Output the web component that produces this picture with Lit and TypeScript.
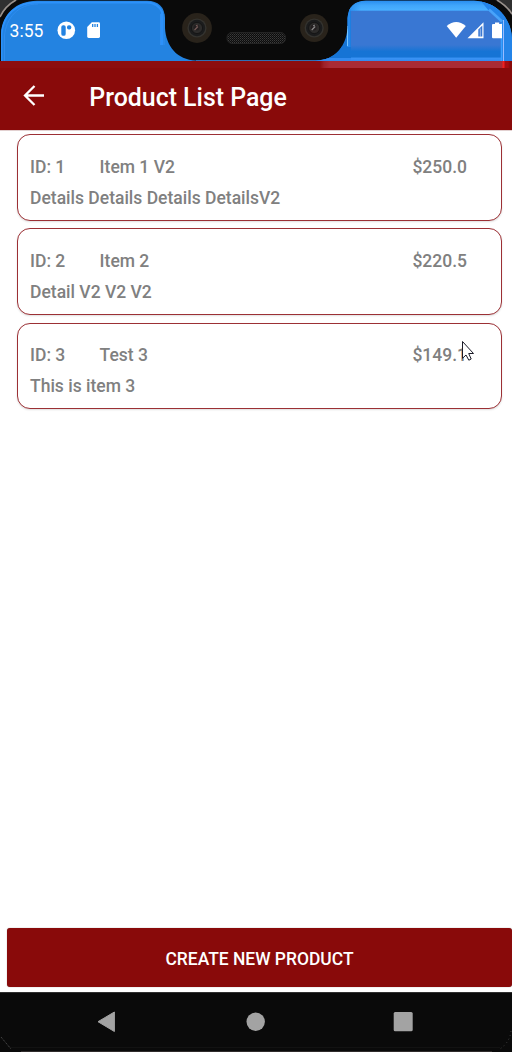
import { LitElement, html, css, svg } from "lit";
import { customElement, property } from "lit/decorators.js";

interface Product {
  id: number;
  name: string;
  price: string;
  details: string;
}

const PRODUCTS: Product[] = [
  { id: 1, name: "Item 1 V2", price: "$250.0", details: "Details Details Details DetailsV2" },
  { id: 2, name: "Item 2", price: "$220.5", details: "Detail V2 V2 V2" },
  { id: 3, name: "Test 3", price: "$149.1", details: "This is item 3" },
];

@customElement("status-bar")
class StatusBar extends LitElement {
  static styles = css`
    :host { display: block; height: 61px; position: relative; background: #0a0a0a; }
    .shell { position: absolute; inset: 0; display: block; }
    .row { position: relative; display: flex; align-items: center; height: 61px; padding-left: 9.600px; box-sizing: border-box; color: #fff; }
    .time { font-size: 17.5px; line-height: 20px; width: 47.400px; }
    .left, .right { display: block; }
    .right { margin-left: auto; }
  `;

  private camera(x: number, y: number, r: number, glint: string) {
    return svg`
      <circle cx=${x} cy=${y} r=${r} fill="#29231b"/>
      <circle cx=${x} cy=${y} r="9.6" fill="#34332f"/>
      <circle cx=${x} cy=${y} r="8.2" fill="#1b1c1d"/>
      <circle cx=${x} cy=${y} r="5.6" fill="#2d2c2b" stroke="#151515" stroke-width="1"/>
      <circle cx=${x - 0.5} cy=${y - 0.5} r="3" fill="#231f20"/>
      <path d="M${x - 2.5} ${y + 2}l3.500-3.500M${x - 1} ${y - 2}l1.500-1" stroke=${glint} stroke-width="1.200" opacity=".8"/>`;
  }

  render() {
    return html`
      <svg class="shell" width="512" height="61" viewBox="0 0 512 61">
        <defs>
          <clipPath id="l"><path d="M1 61V34C2 14 16 1 37 .8H147Q164 1 165 18V28C166 46 177 60 196 60.5V61Z"/></clipPath>
          <clipPath id="r"><path d="M316 61V60.5C335 60 346 47 347.500 28V18Q349 1 366 .8H474C497 2 511 18 512 38V61Z"/></clipPath>
          <linearGradient id="low" x1="0" y1="0" x2="0" y2="1"><stop offset="0" stop-color="#3977d3"/><stop offset=".4" stop-color="#1674d5"/><stop offset=".75" stop-color="#1674d5"/><stop offset=".82" stop-color="#3a93f5"/><stop offset="1" stop-color="#338bee"/></linearGradient>
          <linearGradient id="top" x1="0" y1="0" x2="0" y2="1"><stop offset="0" stop-color="#268aed"/><stop offset=".5" stop-color="#40a6fb"/><stop offset=".9" stop-color="#4ab0ff"/><stop offset="1" stop-color="#3a8fea"/></linearGradient>
          <linearGradient id="fade" x1="0" y1="0" x2="1" y2="0"><stop offset="0" stop-color="#2488ec"/><stop offset="1" stop-color="#2488ec" stop-opacity="0"/></linearGradient>
          <pattern id="mesh" width="2" height="2" patternUnits="userSpaceOnUse"><rect width="2" height="2" fill="#0c0c0c"/><rect width="1" height="1" fill="#3c3c3c"/><rect x="1" y="1" width="1" height="1" fill="#282828"/></pattern>
        </defs>
        <path d="M0 18C5 9 9 4 18 0H0Z" fill="#303030"/>
        <path d="M0 17Q5 6 16 0" fill="none" stroke="#99918c" stroke-width="1.600"/>
        <path d="M495 0Q507 5 512 16V0Z" fill="#303030"/>
        <path d="M497 0Q507 6 512 14" fill="none" stroke="#99918c" stroke-width="1.600"/>
        <g clip-path="url(#l)">
          <rect width="200" height="61" fill="#2383e1"/>
          <path d="M1.500 61V34C3 15 16 2.500 37 2.500H147Q158 3 162 12V45" fill="none" stroke="#2c91fa" stroke-width="2"/>
          <path d="M4.500 61V36C6 18 18 4 38 4" fill="none" stroke="#2e8cee" stroke-width="1"/>
          <path d="M160.500 14V45M164 14V45" stroke="#318ff2" stroke-width="1"/>
        </g>
        <g clip-path="url(#r)">
          <rect x="312" width="200" height="61" fill="#1674d5"/>
          <rect x="351" y="11" width="151" height="36" fill="#3977d3"/>
          <rect x="312" y="46" width="200" height="15" fill="#1674d5"/>
          <rect x="351" y="45" width="151" height="16" fill="url(#low)"/>
          <rect x="312" y="58" width="39" height="3" fill="#338bee"/>
          <rect x="347" y="0" width="165" height="11" fill="url(#top)"/>
          <rect x="347" y="0" width="14" height="11" fill="url(#fade)"/>
          <rect x="347" y="9" width="3.500" height="38" fill="#2488ec"/>
          <path d="M347.500 26V46" stroke="#77c5ff" stroke-width="1"/>
          <path d="M489 11L502 23V61H512V20L495 0H480Z" fill="#2484e8"/>
          <path d="M489 9.500L502 21.500" stroke="#48a3fa" stroke-width="2.500"/>
          <path d="M503.500 20V61" stroke="#99bcff" stroke-width="1"/>
          <path d="M501.500 23V61" stroke="#3aa0ff" stroke-width="1.500"/>
        </g>
        ${this.camera(197, 28, 14.9, "#8a6b66")}
        ${this.camera(314.2, 28, 14.1, "#a5a5a5")}
        <rect x="227" y="32.500" width="58.500" height="11" rx="5" fill="url(#mesh)" stroke="#242424"/>
        <path d="M196 60.500H316" stroke="#2f6fb5" stroke-width="1"/>
      </svg>
      <div class="row">
        <span class="time">3:55</span>
        <svg class="left" width="50" height="22" viewBox="57 20 50 22">
          <circle cx="66.300" cy="30.300" r="8.800" fill="#fff"/>
          <rect x="61.300" y="25.200" width="4.400" height="10.600" rx="1.900" fill="#2383e1"/>
          <rect x="67" y="25.200" width="4.300" height="4.300" rx="1.900" fill="#2383e1"/>
          <path d="M91.800 22.300H98.600Q100 22.300 100 23.700V36.600Q100 38 98.600 38H88.600Q87.200 38 87.200 36.600V27Z" fill="#fff"/>
          <path d="M92.700 24V27M95 24V27M97.400 24V27" stroke="#2383e1" stroke-width="1.300"/>
        </svg>
        <svg class="right" width="68" height="22" viewBox="444 20 68 22">
          <path d="M446.700 26Q456.200 18 465.800 26L456.200 37.700Z" fill="#fff"/>
          <path d="M483.500 22.300V38.200H467.500Z" fill="#fff"/>
          <path d="M478.300 29.500L482.300 25.500V36.600H478.300Z" fill="#3977d3"/>
          <path d="M480.300 28.500V36.600" stroke="#fff" stroke-width="1" opacity=".5"/>
          <path d="M495 22.500H499.200V24H502V38.200H493Q492 38.200 492 37V25Q492 24 493 24H495Z" fill="#fff"/>
        </svg>
      </div>`;
  }
}

@customElement("product-card")
class ProductCard extends LitElement {
  @property({ attribute: false }) product!: Product;

  static styles = css`
    :host { display: block; box-sizing: border-box; height: 86.700px; border: 1px solid #9c3035; border-radius: 13px; background: #fff; box-shadow: 0 1px 2px rgba(0, 0, 0, .13); padding: 20.700px 34px 0 12px; color: #808080; font-size: 17.5px; font-weight: 500; line-height: 23px; white-space: nowrap; }
    .head { display: grid; grid-template-columns: 69.600px 1fr auto; margin-bottom: 8px; }
  `;

  render() {
    const p = this.product;
    return html`
      <div class="head"><span>ID: ${p.id}</span><span>${p.name}</span><span>${p.price}</span></div>
      <div>${p.details}</div>`;
  }
}

@customElement("app-root")
class AppRoot extends LitElement {
  static styles = css`
    :host { display: flex; flex-direction: column; position: relative; width: 512px; height: 1052px; overflow: hidden; background: #fff; font-family: Roboto, "Liberation Sans", sans-serif; }
    status-bar { flex: none; }
    .appbar { flex: none; box-sizing: border-box; height: 69px; padding-left: 22px; display: flex; align-items: center; color: #fff; background: linear-gradient(90deg, #8c0d0f 0 320px, #9e2128 324px, #aa2b34 330px 502px, #f02020 503px 504px, #a80c10 505px 508px, #890a0a 510px) 0 0 / 100% 7px no-repeat #890a0a; }
    .appbar h1 { margin: 4px 0 0 43.300px; font-size: 24.900px; line-height: 30px; font-weight: 500; }
    .list { flex: 1; display: flex; flex-direction: column; gap: 7.500px; padding: 3.300px 10px 0 17px; border-top: 1px solid #e2d0d0; box-sizing: border-box; }
    product-card { flex: none; }
    .create { flex: none; margin: 0 0 4.700px 7px; height: 59px; border: 0; padding: 2px 0 0; border-radius: 3px; background: #890a0a; color: #fff; font: 500 17.450px/22px Roboto, "Liberation Sans", sans-serif; box-shadow: 0 0 1px #777; }
    .nav { flex: none; display: block; }
    .pointer { position: absolute; left: 461px; top: 340px; }
  `;

  render() {
    return html`
      <status-bar></status-bar>
      <header class="appbar">
        <svg width="24" height="24" viewBox="22 84 24 24"><path d="M44 95.500H25M34.500 86L25 95.500L34.500 105" fill="none" stroke="#fff" stroke-width="2.300"/></svg>
        <h1>Product List Page</h1>
      </header>
      <main class="list">
        ${PRODUCTS.map((p) => html`<product-card .product=${p}></product-card>`)}
      </main>
      <button class="create">CREATE NEW PRODUCT</button>
      <svg class="nav" width="512" height="60" viewBox="0 992 512 60">
        <rect y="992" width="512" height="60" fill="#0a0a0a"/>
        <path d="M0 992.500H512" stroke="#303030"/>
        <path d="M10 1047.500H500" stroke="#121212"/>
        <path d="M21 1051.500H492" stroke="#302c2c"/>
        <path d="M1 1037L11 1049" stroke="#555" stroke-dasharray="1 1"/>
        <path d="M511 1031Q510 1042 500 1049" fill="none" stroke="#444" stroke-dasharray="1 3"/>
        <path d="M98 1021.700L114.400 1012V1031.500Z" fill="#a3a3a3" stroke="#a3a3a3" stroke-linejoin="round"/>
        <circle cx="255.700" cy="1021.800" r="9.200" fill="#a3a3a3"/>
        <rect x="393.700" y="1012" width="19" height="19.300" rx="1.500" fill="#a3a3a3"/>
      </svg>
      <svg class="pointer" width="14" height="22" viewBox="461 340 14 22">
        <path d="M462.500 341.500V358.300L466 355L468.800 360.200L471.200 359L468.700 353.500H473.500Z" fill="#fff" stroke="#1b1b28" stroke-width="1"/>
      </svg>`;
  }
}
